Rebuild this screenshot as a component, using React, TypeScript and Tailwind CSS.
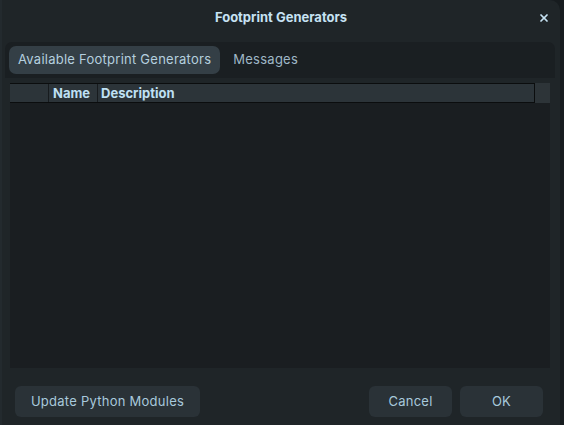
import { X } from "lucide-react";

const font = { fontFamily: "Inter, 'Noto Sans', sans-serif" };

function DialogButton({ text, className }: { text: string; className: string }) {
  return (
    <button
      className={`h-[31px] rounded-[6px] bg-[#2a3237] text-[13px] tracking-[0.25px] text-[#a8c9dc] ${className}`}
    >
      {text}
    </button>
  );
}

export default function App() {
  return (
    <div className="w-[564px] h-[425px] bg-[#171c1f] flex" style={font}>
      <div className="w-[560px] h-[425px] bg-[#1f2528] rounded-tr-[10px] flex flex-col border-l-[2px] border-[#232a2e]">
        {/* title bar */}
        <div className="relative h-[36px] flex items-center justify-center">
          <span className="text-[13px] font-bold text-[#c6e2f3]">Footprint Generators</span>
          <X className="absolute right-[10px] top-[12px] text-[#c6e2f3]" size={12} strokeWidth={3.5} />
        </div>

        {/* tabs */}
        <div className="mt-[6px] ml-[3px] w-[550px] h-[36px] bg-[#1a1f22] rounded-t-[7px] flex items-center px-[4px] gap-[4px]">
          <div className="h-[28px] px-[9px] flex items-center rounded-[7px] bg-[#343f46] text-[13px] tracking-[0.25px] text-[#b4cfdf]">
            Available Footprint Generators
          </div>
          <div className="h-[28px] px-[9px] flex items-center text-[13px] tracking-[0.25px] text-[#9fb8c7]">Messages</div>
        </div>

        {/* table */}
        <div className="mt-[5px] ml-[8px] w-[540px] h-[285px] bg-[#1a1e21] flex flex-col">
          <div className="h-[20px] flex bg-[#2c3439]">
            <div className="w-[525px] flex border-y border-r border-[#0b0d0e]">
              <div className="w-[39px] border-r border-[#171b1e]" />
              <div className="w-[49px] border-r border-[#171b1e] pl-[4px] text-[13px] font-bold text-[#bfe0f4] leading-[18px]">
                Name
              </div>
              <div className="flex-1 pl-[3px] text-[13px] font-bold text-[#bfe0f4] leading-[18px]">Description</div>
            </div>
            <div className="flex-1 bg-[#2d3438]" />
          </div>
        </div>

        {/* buttons */}
        <div className="mt-[18px] flex items-center pl-[13px] pr-[17px]">
          <DialogButton text="Update Python Modules" className="w-[185px]" />
          <div className="flex-1" />
          <DialogButton text="Cancel" className="w-[83px]" />
          <DialogButton text="OK" className="w-[83px] ml-[8px]" />
        </div>
      </div>
    </div>
  );
}
